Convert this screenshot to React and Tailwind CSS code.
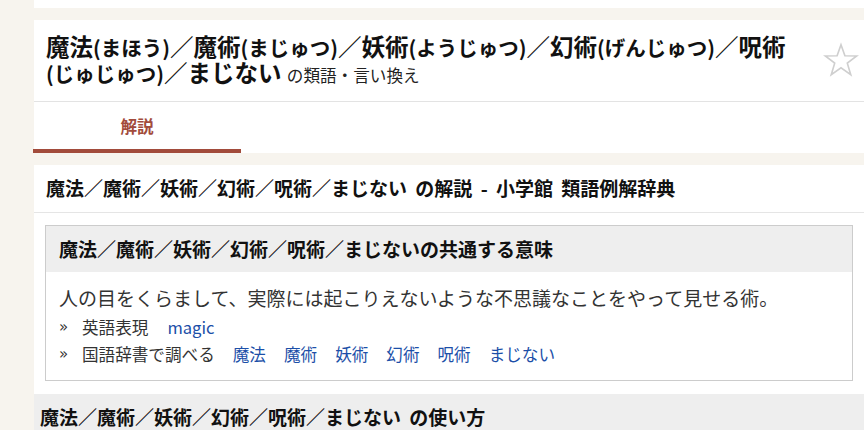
import React from 'react';

const jp = { fontFamily: '"Noto Sans CJK JP", "Noto Sans", sans-serif' };

const Reading = ({ children }) => (
  <span className="whitespace-nowrap text-[20.5px] leading-none">({children})</span>
);

const StarIcon = () => (
  <svg width="36" height="36" viewBox="0 0 24 24" fill="none" stroke="#cfcfcf" strokeWidth="1.1" strokeLinejoin="miter">
    <polygon points="12,1.8 14.6,9.2 22.5,9.3 16.2,14.1 18.5,21.8 12,17.2 5.5,21.8 7.8,14.1 1.5,9.3 9.4,9.2" />
  </svg>
);

const Bullet = () => (
  <span className="w-[23px] font-['DejaVu_Sans',sans-serif] text-[15px] text-[#333]">»</span>
);

const links = ['魔法', '魔術', '妖術', '幻術', '呪術', 'まじない'];

const App = () => {
  return (
    <div className="min-h-[430px] w-[864px] overflow-hidden bg-[#f7f4ee] text-[#222]" style={jp}>
      <div className="ml-[34px]">
        <div className="h-[8px] bg-white" />

        {/* heading panel */}
        <div className="mt-[12px] bg-white">
          <div className="flex items-start border-b border-[#e3e3e3] pl-3 pr-[5px]">
            <h1 className="h-[81px] flex-1 pt-[13px] text-[23.5px] font-bold leading-[26px] text-[#111]">
              魔法<Reading>まほう</Reading>／魔術<Reading>まじゅつ</Reading>／妖術<Reading>ようじゅつ</Reading>／幻術<Reading>げんじゅつ</Reading>／呪術<Reading>じゅじゅつ</Reading>／まじない{' '}
              <span className="text-[16.6px] font-normal leading-none text-[#222]">の類語・言い換え</span>
            </h1>
            <button className="mt-[22px] ml-4 shrink-0">
              <StarIcon />
            </button>
          </div>
          <div className="flex">
            <div className="-ml-px flex h-[51px] w-[208px] items-center justify-center border-b-4 border-[#a24b3b] pt-[2px] text-[16.6px] font-bold text-[#a24b3b]">
              解説
            </div>
          </div>
        </div>

        {/* explanation panel */}
        <div className="mt-[12px] bg-white pb-[13px]">
          <h2 className="flex h-[48px] items-center border-b border-[#e5e5e5] pl-3 text-[19px] font-bold text-[#111] [word-spacing:4px]">
            魔法／魔術／妖術／幻術／呪術／まじない の解説 - 小学館 類語例解辞典
          </h2>
          <div className="mx-[11px] mt-[12px] border border-[#cccccc]">
            <div className="flex h-[46px] items-center bg-[#eeeeee] px-[13px] text-[19px] font-bold text-[#111]">
              魔法／魔術／妖術／幻術／呪術／まじないの共通する意味
            </div>
            <div className="px-[13px] pt-[12px] pb-[12px]">
              <p className="text-[19px] leading-[28px] text-[#333]">
                人の目をくらまして、実際には起こりえないような不思議なことをやって見せる術。
              </p>
              <ul className="pt-[2px] text-[16.6px] leading-[27px] text-[#333]">
                <li className="flex">
                  <Bullet />
                  <span>英語表現</span>
                  <a className="ml-[19px] text-[#1c4fa8]">magic</a>
                </li>
                <li className="flex">
                  <Bullet />
                  <span>国語辞書で調べる</span>
                  {links.map((w) => (
                    <a key={w} className="ml-[18px] text-[#1c4fa8]">
                      {w}
                    </a>
                  ))}
                </li>
              </ul>
            </div>
          </div>
        </div>

        {/* usage section */}
        <div className="flex h-[47px] items-center bg-[#eeeeee] pl-[6px] text-[19px] font-bold text-[#111] [word-spacing:4px]">
          魔法／魔術／妖術／幻術／呪術／まじない の使い方
        </div>
      </div>
    </div>
  );
};

export default App;
